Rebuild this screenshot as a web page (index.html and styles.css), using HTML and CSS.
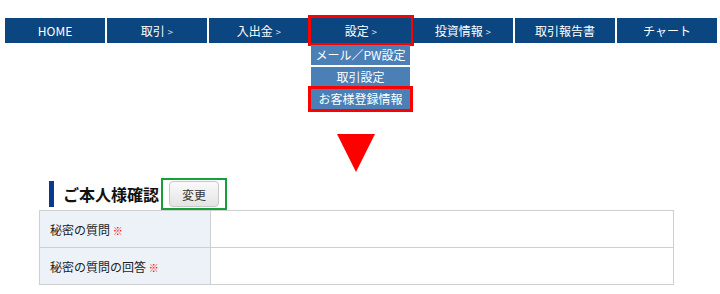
FILE: index.html
```html
<!DOCTYPE html>
<html lang="ja">
<head>
  <meta charset="UTF-8">
  <title>設定 - お客様登録情報</title>
  <link rel="stylesheet" href="styles.css">
</head>
<body>
  <nav class="gnav">
    <ul>
      <li><a href="#">HOME</a></li>
      <li><a href="#">取引 <span class="arr">&gt;</span></a></li>
      <li><a href="#">入出金 <span class="arr">&gt;</span></a></li>
      <li class="current">
        <a href="#">設定 <span class="arr">&gt;</span></a>
        <ul class="sub">
          <li><a href="#">メール／PW設定</a></li>
          <li><a href="#">取引設定</a></li>
          <li class="mark"><a href="#">お客様登録情報</a></li>
        </ul>
      </li>
      <li><a href="#">投資情報 <span class="arr">&gt;</span></a></li>
      <li><a href="#">取引報告書</a></li>
      <li><a href="#">チャート</a></li>
    </ul>
  </nav>

  <div class="arrow-down"></div>

  <div class="section">
    <div class="section-head">
      <h2>ご本人様確認</h2>
      <div class="btn-wrap"><button class="btn-edit">変更</button></div>
    </div>
    <table class="info">
      <tr>
        <th>秘密の質問 <span class="req">※</span></th>
        <td></td>
      </tr>
      <tr>
        <th>秘密の質問の回答 <span class="req">※</span></th>
        <td></td>
      </tr>
    </table>
  </div>
</body>
</html>
```

FILE: styles.css
```css
body {
  margin: 0;
  font-family: "Noto Sans CJK JP", "DejaVu Sans", sans-serif;
  background-color: #fff;
  color: #222;
}

.gnav {
  padding: 18px 0 0 5px;
}

.gnav ul {
  list-style: none;
  margin: 0;
  padding: 0;
}

.gnav > ul {
  display: flex;
  gap: 2px;
}

.gnav > ul > li {
  position: relative;
  width: 100px;
}

.gnav > ul > li > a {
  display: block;
  height: 25px;
  line-height: 25px;
  background-color: #0b4680;
  color: #fff;
  font-size: 12px;
  text-align: center;
  text-decoration: none;
}

.gnav .arr {
  font-size: 10px;
  color: #d8d8d8;
}

.gnav .current > a {
  outline: 3px solid #f00;
}

.sub {
  position: absolute;
  top: 27px;
  left: 0;
  width: 99px;
  display: flex;
  flex-direction: column;
  gap: 2px;
}

.sub li a {
  display: block;
  height: 20px;
  line-height: 20px;
  background-color: #4a80b6;
  color: #fff;
  font-size: 12px;
  text-align: center;
  text-decoration: none;
}

.sub li.mark a {
  outline: 3px solid #f00;
}

.arrow-down {
  width: 0;
  height: 0;
  margin: 91px 0 0 337px;
  border-left: 19px solid transparent;
  border-right: 19px solid transparent;
  border-top: 38px solid #f00;
}

.section {
  margin: 5px 0 0 39px;
  width: 635px;
}

.section-head {
  display: flex;
  align-items: center;
  height: 34px;
  margin-left: 10px;
}

.section-head h2 {
  margin: 0;
  padding-left: 9px;
  border-left: 5px solid #0b3a8c;
  height: 26px;
  line-height: 26px;
  font-size: 16px;
  font-weight: bold;
  color: #111;
}

.btn-wrap {
  margin-left: 2px;
  padding: 1px 6px;
  border: 2px solid #16a03c;
}

.btn-edit {
  display: block;
  width: 50px;
  height: 26px;
  font-family: inherit;
  font-size: 12px;
  color: #333;
  background: linear-gradient(#fafafa, #e4e4e4);
  border: 1px solid #c8c8c8;
  border-radius: 4px;
}

.info {
  width: 100%;
  margin-top: -1px;
  border-collapse: collapse;
  font-size: 12px;
}

.info th,
.info td {
  border: 1px solid #cfcfcf;
  height: 34px;
}

.info th {
  width: 160px;
  padding: 0 0 0 10px;
  background-color: #edf1f8;
  font-weight: normal;
  text-align: left;
}

.req {
  color: #e00;
  font-size: 10px;
}
```
